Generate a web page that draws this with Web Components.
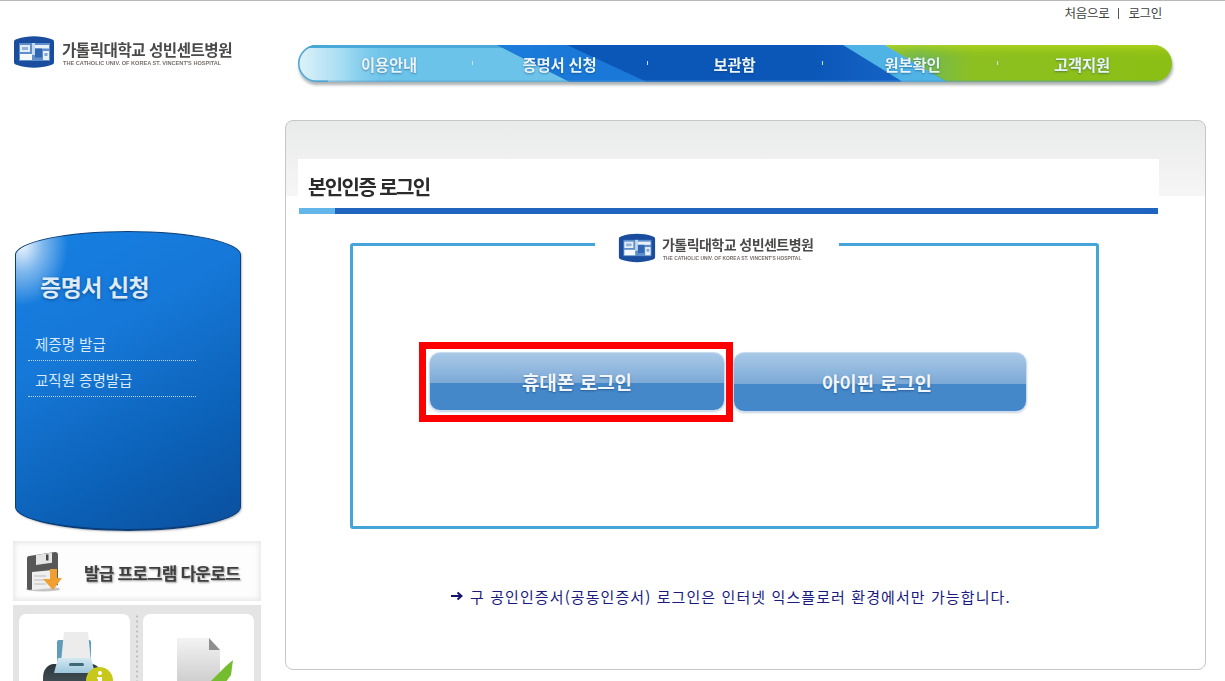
<!DOCTYPE html>
<html lang="ko">
<head>
<meta charset="utf-8">
<title>본인인증 로그인</title>
<style>
  html, body { margin: 0; padding: 0; background: #fff; }
  body { font-family: "Noto Sans CJK KR", "Noto Sans", sans-serif; overflow: hidden; }
</style>
</head>
<body>
<app-page>
  <site-header>
    <site-logo slot="logo"></site-logo>
    <top-links slot="links"></top-links>
    <main-nav slot="nav">
      <nav-item style="--shift:9px">이용안내</nav-item>
      <nav-item>증명서 신청</nav-item>
      <nav-item>보관함</nav-item>
      <nav-item style="--shift:6px">원본확인</nav-item>
      <nav-item style="--shift:-5px">고객지원</nav-item>
    </main-nav>
  </site-header>
  <side-bar slot="side">
    <side-drum heading="증명서 신청">
      <drum-link>제증명 발급</drum-link>
      <drum-link>교직원 증명발급</drum-link>
    </side-drum>
    <download-banner>발급 프로그램 다운로드</download-banner>
    <tool-cards></tool-cards>
  </side-bar>
  <login-panel slot="main" heading="본인인증 로그인">
    <login-frame>
      <site-logo slot="legend" small></site-logo>
      <login-button selected>휴대폰 로그인</login-button>
      <login-button>아이핀 로그인</login-button>
    </login-frame>
    <notice-line>구 공인인증서(공동인증서) 로그인은 인터넷 익스플로러 환경에서만 가능합니다.</notice-line>
  </login-panel>
</app-page>

<script>
class AppPage extends HTMLElement {
  connectedCallback() {
    this.attachShadow({ mode: 'open' });
    this.shadowRoot.innerHTML = `
      <style>
        :host { display: block; width: 1225px; height: 681px; overflow: hidden; border-top: 1px solid #b9b9b9; box-sizing: border-box; }
        .body { display: flex; }
        .side { width: 285px; flex: none; }
      </style>
      <slot></slot>
      <div class="body">
        <div class="side"><slot name="side"></slot></div>
        <slot name="main"></slot>
      </div>
    `;
  }
}

class SiteHeader extends HTMLElement {
  connectedCallback() {
    this.attachShadow({ mode: 'open' });
    this.shadowRoot.innerHTML = `
      <style>
        :host { display: flex; height: 119px; }
        .left { width: 285px; flex: none; padding: 35px 0 0 13px; box-sizing: border-box; }
        .right { flex: 1; display: flex; flex-direction: column; padding-left: 13px; }
      </style>
      <div class="left"><slot name="logo"></slot></div>
      <div class="right">
        <slot name="links"></slot>
        <slot name="nav"></slot>
      </div>
    `;
  }
}

class SiteLogo extends HTMLElement {
  connectedCallback() {
    const small = this.hasAttribute('small');
    this.attachShadow({ mode: 'open' });
    this.shadowRoot.innerHTML = `
      <style>
        :host { display: flex; align-items: flex-start; gap: ${small ? 6 : 7}px; color: #4c4a49; }
        svg { display: block; flex: none; width: ${small ? 38 : 42}px; height: ${small ? 30 : 32}px; filter: blur(.4px); }
        .txt { display: flex; flex-direction: column; margin-top: ${small ? -1 : 0}px; filter: blur(.35px); }
        .ko { font-size: ${small ? 14 : 15.6}px; line-height: ${small ? 24 : 26}px; font-weight: 700; letter-spacing: ${small ? -.55 : -.5}px; white-space: nowrap; height: ${small ? 23 : 24}px; }
        .en { font-size: ${small ? 4.9 : 5.6}px; line-height: 7px; color: #77706c; white-space: nowrap; font-family: "Liberation Sans", sans-serif; font-weight: 700; margin-left: 1px; }
      </style>
      <svg viewBox="0 0 42 32">
        <path d="M1 6C1 4 2 3.600 4 3 15 -.6 27 -.6 38 3c2 .6 3 1 3 3v20c0 2-1 2.400-3 3-11 3.600-23 3.600-34 0-2-.6-3-1-3-3z" fill="#1a4d9e"/>
        <rect x="6" y="7" width="31" height="18" fill="#5f8fca"/>
        <rect x="7" y="9" width="10" height="7" fill="#e4edf7"/>
        <rect x="9" y="11" width="6" height="3" fill="#8fb2da"/>
        <rect x="7" y="18" width="12" height="6" fill="#f5f9fc"/>
        <rect x="19" y="7" width="3" height="12" fill="#c4d8ee"/>
        <rect x="22" y="9" width="14" height="3.500" fill="#e8f0f8"/>
        <rect x="22" y="12.500" width="7" height="9" fill="#2f67b2"/>
        <rect x="30" y="15" width="6" height="9" fill="#e8f0f8"/>
        <rect x="31.500" y="17" width="3" height="3" fill="#7fa6d4"/>
      </svg>
      <div class="txt">
        <span class="ko">가톨릭대학교 성빈센트병원</span>
        <span class="en">THE CATHOLIC UNIV. OF KOREA ST. VINCENT'S HOSPITAL</span>
      </div>
    `;
  }
}

class TopLinks extends HTMLElement {
  connectedCallback() {
    this.attachShadow({ mode: 'open' });
    this.shadowRoot.innerHTML = `
      <style>
        :host { display: flex; justify-content: flex-end; gap: 7px; height: 44px; padding: 3px 63px 0 0; box-sizing: border-box; font-size: 12.500px; line-height: 18px; color: #3f3f3f; letter-spacing: -.3px; }
        span { white-space: nowrap; }
        i { display: block; width: 1px; height: 11px; margin: 4px 2px 0; background: #555; }
      </style>
      <span>처음으로</span><i></i><span>로그인</span>
    `;
  }
}

class MainNav extends HTMLElement {
  connectedCallback() {
    this.attachShadow({ mode: 'open' });
    this.shadowRoot.innerHTML = `
      <style>
        :host { display: block; position: relative; width: 874px; height: 37px; margin-top: 0; filter: drop-shadow(1px 3px 1.500px rgba(70,80,80,.45)); }
        svg { position: absolute; inset: 0; width: 874px; height: 37px; display: block; }
        .items { position: relative; display: grid; grid-template-columns: repeat(5, 175px); width: 875px; height: 37px; margin-left: -1px; }
      </style>
      <svg viewBox="0 0 874 37" preserveAspectRatio="none">
        <defs>
          <clipPath id="pill"><rect width="874" height="37" rx="18.500"/></clipPath>
          <linearGradient id="shine" x1="0" x2="1" y1="0" y2="0">
            <stop offset="0" stop-color="#dff2fa"/><stop offset=".45" stop-color="#a5dcf2"/><stop offset="1" stop-color="#6cc3ea" stop-opacity="0"/>
          </linearGradient>
          <linearGradient id="blue" x1="0" x2="1" y1="0" y2="0">
            <stop offset="0" stop-color="#2877d2"/><stop offset=".12" stop-color="#0b57b8"/><stop offset=".7" stop-color="#0b57b8"/><stop offset="1" stop-color="#1c6ad0"/>
          </linearGradient>
          <linearGradient id="green" x1="0" x2="1" y1="0" y2="0">
            <stop offset="0" stop-color="#8dc13a"/><stop offset=".12" stop-color="#6fb858"/><stop offset=".3" stop-color="#8cc022"/><stop offset="1" stop-color="#8cbf14"/>
          </linearGradient>
          <linearGradient id="gv" x1="0" x2="0" y1="0" y2="1">
            <stop offset="0" stop-color="#b4d81e" stop-opacity=".75"/><stop offset="1" stop-color="#8abb10" stop-opacity="0"/>
          </linearGradient>
        </defs>
        <g clip-path="url(#pill)">
          <rect width="280" height="37" fill="#6cc3ea"/>
          <rect width="100" height="37" fill="url(#shine)"/>
          <rect width="270" height="3" fill="#49a9d8"/>
          <path d="M199 0H550l100 37H272z" fill="url(#blue)"/>
          <path d="M199 0h70l80 37h-77z" fill="#1c7ddb" opacity=".9"/>
          <path d="M600 37l50-18 24 18z" fill="#2a84dc"/>
          <path d="M545 0h42l62 37h-44z" fill="#4fb3e6"/>
          <path d="M587 0H874v37H649z" fill="url(#green)"/>
          <path d="M587 0H874v14H610z" fill="url(#gv)"/>
          <rect y="35.500" width="874" height="1.500" fill="#5a98c8" opacity=".5"/>
        </g>
        <path d="M30 .8H18.500a17.700 17.700 0 0 0 0 35.400H30" fill="none" stroke="#49a5d2" stroke-width="1.500"/>
        <g fill="#c8e4f2">
          <rect x="174" y="16" width="1" height="4"/><rect x="349" y="16" width="1" height="4"/><rect x="524" y="16" width="1" height="4"/><rect x="699" y="16" width="1" height="4"/>
        </g>
      </svg>
      <div class="items"><slot></slot></div>
    `;
  }
}

class NavItem extends HTMLElement {
  connectedCallback() {
    this.attachShadow({ mode: 'open' });
    this.shadowRoot.innerHTML = `
      <style>
        :host { display: flex; align-items: center; justify-content: center; height: 37px; padding-left: max(var(--shift, 0px), 0px); padding-right: max(calc(var(--shift, 0px) * -1), 0px); box-sizing: border-box; color: #e9f3f8; font-size: 15.400px; font-weight: 700; letter-spacing: -.2px; text-shadow: 0 1px 2px rgba(0,50,90,.45); white-space: nowrap; filter: blur(.2px); }
      </style>
      <slot></slot>
    `;
  }
}

class SideBar extends HTMLElement {
  connectedCallback() {
    this.attachShadow({ mode: 'open' });
    this.shadowRoot.innerHTML = `
      <style>
        :host { display: flex; flex-direction: column; width: 285px; padding: 111px 0 0 13px; box-sizing: border-box; }
      </style>
      <slot></slot>
    `;
  }
}

class SideDrum extends HTMLElement {
  connectedCallback() {
    this.attachShadow({ mode: 'open' });
    this.shadowRoot.innerHTML = `
      <style>
        :host { display: block; width: 226px; height: 300px; margin-left: 2px; box-sizing: border-box; padding: 38px 44px 0 12px; border-radius: 113px / 24px; border: 1px solid #0c3d78; border-width: 1px 1px 2px; color: #fff;
          background:
            radial-gradient(46px 62px at 6px 12px, rgba(255,255,255,.95), rgba(255,255,255,.45) 45%, rgba(255,255,255,0) 100%),
            linear-gradient(150deg, #1680e2 0%, #1678d8 35%, #0b5fb4 75%, #0b4f9e 100%);
          box-shadow: 1px 1px 2px rgba(0,0,0,.25); }
        h2 { margin: 0 0 23px 12px; font-size: 23px; line-height: 32px; font-weight: 700; color: #dcebf7; letter-spacing: -.5px; text-shadow: 0 1px 3px rgba(0,40,90,.6); white-space: nowrap; }
      </style>
      <h2>${this.getAttribute('heading')}</h2>
      <slot></slot>
    `;
  }
}

class DrumLink extends HTMLElement {
  connectedCallback() {
    this.attachShadow({ mode: 'open' });
    this.shadowRoot.innerHTML = `
      <style>
        :host { display: block; height: 36px; padding: 9px 0 0 7px; box-sizing: border-box; border-bottom: 1px dotted #b8d4ec; font-size: 14.500px; line-height: 20px; color: #d7e8f6; white-space: nowrap; }
      </style>
      <slot></slot>
    `;
  }
}

class DownloadBanner extends HTMLElement {
  connectedCallback() {
    this.attachShadow({ mode: 'open' });
    this.shadowRoot.innerHTML = `
      <style>
        :host { display: flex; align-items: center; width: 248px; height: 60px; margin-top: 10px; padding-left: 11px; box-sizing: border-box; background: #fdfdfd; box-shadow: inset 0 0 5px 2px #e8e8e8; }
        svg { width: 40px; height: 44px; flex: none; margin-right: 20px; filter: blur(.3px); }
        span { font-size: 17px; font-weight: 700; color: #3f3f3f; letter-spacing: -.85px; white-space: nowrap; text-shadow: 1px 1px 2px rgba(0,0,0,.4); filter: blur(.25px); margin-top: 3px; }
      </style>
      <svg viewBox="0 0 40 44">
        <ellipse cx="19" cy="40" rx="17" ry="2.500" fill="#c4c4c4"/>
        <path d="M5 7 31 3c2 0 3 1 3 3v30L5 41c-1 0-2-1-2-2V9c0-1 1-2 2-2z" fill="#575757"/>
        <path d="M12 6 28 3.800v10L12 16z" fill="#e4e4e4"/>
        <rect x="22" y="5.500" width="2.500" height="6" fill="#444"/>
        <path d="M8 23 29 21v18L8 41z" fill="#efefef"/>
        <path d="M10 27h12M10 31h12M10 35h12" stroke="#bbb" stroke-width="1"/>
        <path d="M26 20h7v9h5L29 41 19 30h7z" fill="#f0a030"/>
      </svg>
      <span><slot></slot></span>
    `;
  }
}

class ToolCards extends HTMLElement {
  connectedCallback() {
    this.attachShadow({ mode: 'open' });
    this.shadowRoot.innerHTML = `
      <style>
        :host { display: flex; width: 248px; height: 110px; margin-top: 4px; padding: 9px 7px 0 6px; box-sizing: border-box; background: #e4e4e4; }
        .card { width: 111px; height: 100px; background: #fff; border-radius: 7px; flex: none; overflow: hidden; }
        .sep { width: 13px; flex: none; background: radial-gradient(circle, #bdbdbd 1px, transparent 1.200px) center top / 2px 5px repeat-y; }
        svg { display: block; width: 111px; height: 100px; filter: blur(.3px); }
      </style>
      <div class="card">
        <svg viewBox="0 0 111 100">
          <defs>
            <linearGradient id="pbody" x1="0" x2="0" y1="0" y2="1"><stop offset="0" stop-color="#2b373c"/><stop offset="1" stop-color="#55646b"/></linearGradient>
            <linearGradient id="ppanel" x1="0" x2="0" y1="0" y2="1"><stop offset="0" stop-color="#d4e8f1"/><stop offset="1" stop-color="#9cc7da"/></linearGradient>
          </defs>
          <rect x="38" y="26" width="8" height="24" rx="2" fill="#5f9cb8"/>
          <rect x="65" y="26" width="7" height="24" rx="2" fill="#5f9cb8"/>
          <path d="M45 18h24l3 30H42z" fill="#ececec"/>
          <path d="M34 50c-6 1-10 6-10 14v22h59V64c0-8-4-13-10-14z" fill="url(#pbody)"/>
          <path d="M39 44h33l4 15H35z" fill="url(#ppanel)"/>
          <rect x="50" y="49" width="15" height="3" rx="1.500" fill="#41677a"/>
          <circle cx="80.500" cy="66.500" r="13.500" fill="#c8c81c"/>
          <circle cx="81" cy="59" r="2" fill="#fff"/>
          <path d="M78 63h5v9h1.500v2h-7v-2H79v-7h-1z" fill="#fff"/>
        </svg>
      </div>
      <div class="sep"></div>
      <div class="card">
        <svg viewBox="0 0 111 100">
          <defs><linearGradient id="doc" x1="0" x2="0" y1="0" y2="1"><stop offset="0" stop-color="#f3f3f3"/><stop offset="1" stop-color="#c4c4c4"/></linearGradient></defs>
          <path d="M34 24h32l11 12v44H34z" fill="url(#doc)"/>
          <path d="M66 24l11 12H66z" fill="#8f8f8f"/>
          <path d="M52 67l9 7 22-22 7-6-2 15-24 32-13-20z" fill="#74bd2e"/>
        </svg>
      </div>
    `;
  }
}

class LoginPanel extends HTMLElement {
  connectedCallback() {
    this.attachShadow({ mode: 'open' });
    this.shadowRoot.innerHTML = `
      <style>
        :host { display: block; width: 921px; height: 550px; box-sizing: border-box; padding: 38px 0 0 12px; border: 1px solid #c6c6c6; border-radius: 8px; background: linear-gradient(#e9eaea, #f6f6f6) no-repeat 0 0 / 100% 75px, #fff; }
        .title { width: 861px; height: 49px; background: #fff; box-sizing: border-box; padding: 13px 0 0 10px; }
        h1 { margin: 0; font-size: 20px; line-height: 30px; font-weight: 700; color: #2b2b2b; letter-spacing: -1.600px; filter: blur(.3px); white-space: nowrap; }
        .bar { margin-left: 1px; width: 859px; height: 6px; background: linear-gradient(90deg, #62b6ea 36px, #1f64bf 36px); }
      </style>
      <div class="title"><h1>${this.getAttribute('heading')}</h1></div>
      <div class="bar"></div>
      <slot></slot>
    `;
  }
}

class LoginFrame extends HTMLElement {
  connectedCallback() {
    this.attachShadow({ mode: 'open' });
    this.shadowRoot.innerHTML = `
      <style>
        :host { display: block; width: 749px; height: 286px; margin: 29px 0 0 52px; box-sizing: border-box; border: 3px solid #45a5d8; border-radius: 3px; }
        .legend { display: flex; width: 244px; height: 30px; margin: -13px 0 0 242px; padding-left: 23px; box-sizing: border-box; background: #fff; }
        .row { display: flex; margin: 79px 0 0 66px; }
      </style>
      <div class="legend"><slot name="legend"></slot></div>
      <div class="row"><slot></slot></div>
    `;
  }
}

class LoginButton extends HTMLElement {
  connectedCallback() {
    const sel = this.hasAttribute('selected');
    this.attachShadow({ mode: 'open' });
    this.shadowRoot.innerHTML = `
      <style>
        :host { display: block; box-sizing: border-box; flex: none; ${sel
          ? 'width: 314px; height: 80px; padding: 3px 1px 4px 3px; border: 7px solid #f00;'
          : 'width: 294px; height: 60px; margin-top: 10px;'} }
        button { display: flex; align-items: center; justify-content: center; width: 100%; height: 100%; padding: 0 ${sel ? 0 : 6}px 0 0; font: inherit; font-size: 19px; font-weight: 700; color: #f1f6fb; letter-spacing: 0; border: 1px solid #cbdcec; border-radius: 11px; box-shadow: 0 1px 2px rgba(90,120,160,.35);
          background: linear-gradient(#a9c9e7 0, #7ca9d6 53%, #4488c9 53%, #4488c9 100%); text-shadow: 0 1px 2px rgba(20,60,110,.55); white-space: nowrap; }
      </style>
      <button type="button"><slot></slot></button>
    `;
  }
}

class NoticeLine extends HTMLElement {
  connectedCallback() {
    this.attachShadow({ mode: 'open' });
    this.shadowRoot.innerHTML = `
      <style>
        :host { display: flex; align-items: center; gap: 6px; height: 20px; margin: 57px 0 0 152px; font-size: 15px; color: #1a1a80; white-space: nowrap; letter-spacing: 1.090px; }
        svg { width: 14px; height: 10px; flex: none; }
      </style>
      <svg viewBox="0 0 14 10"><path d="M1 5h10M7.500 1.500 11.500 5l-4 3.500" fill="none" stroke="#14146e" stroke-width="2"/></svg>
      <span><slot></slot></span>
    `;
  }
}

customElements.define('app-page', AppPage);
customElements.define('site-header', SiteHeader);
customElements.define('site-logo', SiteLogo);
customElements.define('top-links', TopLinks);
customElements.define('main-nav', MainNav);
customElements.define('nav-item', NavItem);
customElements.define('side-bar', SideBar);
customElements.define('side-drum', SideDrum);
customElements.define('drum-link', DrumLink);
customElements.define('download-banner', DownloadBanner);
customElements.define('tool-cards', ToolCards);
customElements.define('login-panel', LoginPanel);
customElements.define('login-frame', LoginFrame);
customElements.define('login-button', LoginButton);
customElements.define('notice-line', NoticeLine);
</script>
</body>
</html>
